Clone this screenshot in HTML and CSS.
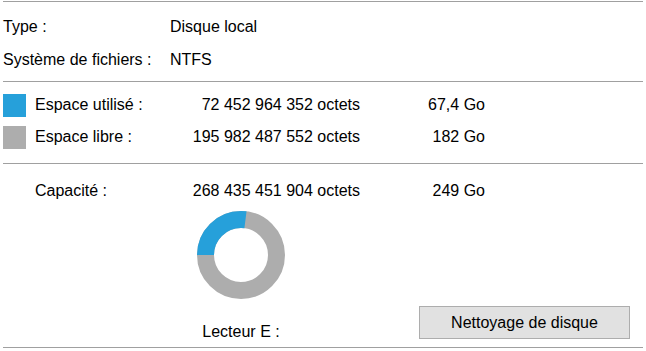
FILE: index.html
```html
<!DOCTYPE html>
<html lang="fr">
<head>
    <meta charset="UTF-8">
    <title>Propriétés du disque</title>
    <link rel="stylesheet" href="styles.css">
</head>
<body>

<div class="panel">
    <div class="section info">
        <div class="row">
            <span class="label">Type :</span>
            <span class="value">Disque local</span>
        </div>
        <div class="row">
            <span class="label">Système de fichiers :</span>
            <span class="value">NTFS</span>
        </div>
    </div>

    <div class="section usage">
        <div class="usage-row">
            <span class="swatch used"></span>
            <span class="label">Espace utilisé :</span>
            <span class="bytes">72 452 964 352 octets</span>
            <span class="size">67,4 Go</span>
        </div>
        <div class="usage-row">
            <span class="swatch free"></span>
            <span class="label">Espace libre :</span>
            <span class="bytes">195 982 487 552 octets</span>
            <span class="size">182 Go</span>
        </div>
    </div>

    <div class="section capacity">
        <div class="usage-row">
            <span></span>
            <span class="label">Capacité :</span>
            <span class="bytes">268 435 451 904 octets</span>
            <span class="size">249 Go</span>
        </div>
        <div class="chart-area">
            <svg class="donut" width="88" height="88" viewBox="0 0 88 88">
                <circle cx="44" cy="44" r="35.5" fill="none" stroke="#adadad" stroke-width="17"/>
                <circle cx="44" cy="44" r="35.5" fill="none" stroke="#26a0da" stroke-width="17"
                        stroke-dasharray="60.2 223.05" transform="rotate(180 44 44)"/>
            </svg>
            <span class="drive">Lecteur E :</span>
            <button class="cleanup">Nettoyage de disque</button>
        </div>
    </div>
</div>

</body>
</html>
```

FILE: styles.css
```css
body {
    margin: 0;
    background: #fff;
    font-family: "Liberation Sans", Arial, sans-serif;
    font-size: 16px;
    color: #000;
}
.panel {
    width: 640px;
    margin: 1px 0 0 3px;
    border-bottom: 1px solid #a0a0a0;
}
.section {
    border-top: 1px solid #a0a0a0;
}
.info {
    padding: 8px 0 5px;
}
.row {
    display: grid;
    grid-template-columns: 167px 1fr;
    height: 33px;
    align-items: center;
}
.usage {
    padding: 7px 0 10px;
}
.usage-row {
    display: grid;
    grid-template-columns: 32px 125px 200px 125px;
    height: 32px;
    align-items: center;
}
.swatch {
    width: 23px;
    height: 23px;
}
.swatch.used {
    background: #26a0da;
}
.swatch.free {
    background: #adadad;
}
.bytes,
.size {
    text-align: right;
}
.capacity {
    padding: 11px 0 8px;
}
.chart-area {
    display: grid;
    grid-template-columns: 194px 88px 1fr;
    grid-template-rows: 88px 33px;
    row-gap: 7px;
    margin-top: 4px;
    align-items: center;
}
.donut {
    grid-column: 2;
    grid-row: 1;
    display: block;
}
.drive {
    grid-column: 2;
    grid-row: 2;
    justify-self: center;
    white-space: nowrap;
    margin-top: 19px;
}
.cleanup {
    grid-column: 3;
    grid-row: 2;
    justify-self: end;
    width: 211px;
    height: 33px;
    margin-right: 13px;
    background: #e1e1e1;
    border: 1px solid #adadad;
    font-family: inherit;
    font-size: 16px;
    color: #000;
    padding: 0;
}
```
